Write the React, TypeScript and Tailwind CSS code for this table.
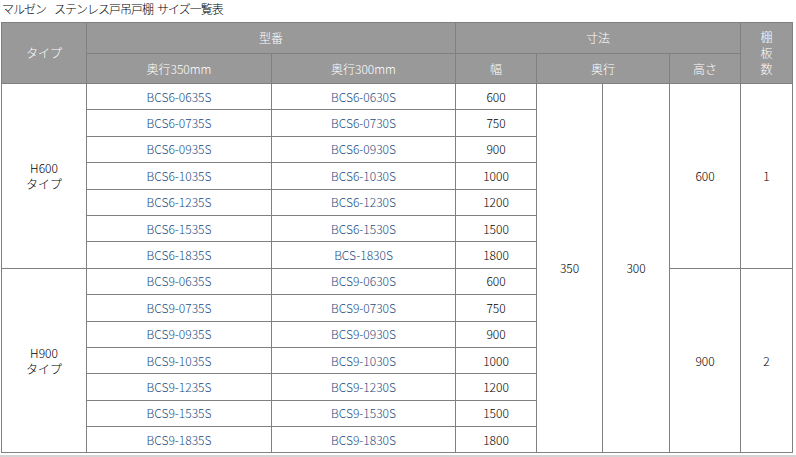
const rows6 = [
  ['BCS6-0635S', 'BCS6-0630S', '600'],
  ['BCS6-0735S', 'BCS6-0730S', '750'],
  ['BCS6-0935S', 'BCS6-0930S', '900'],
  ['BCS6-1035S', 'BCS6-1030S', '1000'],
  ['BCS6-1235S', 'BCS6-1230S', '1200'],
  ['BCS6-1535S', 'BCS6-1530S', '1500'],
  ['BCS6-1835S', 'BCS-1830S', '1800'],
]

const rows9 = [
  ['BCS9-0635S', 'BCS9-0630S', '600'],
  ['BCS9-0735S', 'BCS9-0730S', '750'],
  ['BCS9-0935S', 'BCS9-0930S', '900'],
  ['BCS9-1035S', 'BCS9-1030S', '1000'],
  ['BCS9-1235S', 'BCS9-1230S', '1200'],
  ['BCS9-1535S', 'BCS9-1530S', '1500'],
  ['BCS9-1835S', 'BCS9-1830S', '1800'],
]

const th = 'border border-[#808080] bg-[#999999] text-white font-light text-center p-0'
const td = 'border border-[#808080] text-center p-0'
const link = 'text-[#1a4c80]'

const App = () => {
  const groups = [
    { type: 'H600', height: '600', shelves: '1', rows: rows6 },
    { type: 'H900', height: '900', shelves: '2', rows: rows9 },
  ]

  return (
    <div
      className="relative h-[457px] w-[796px] overflow-hidden bg-white text-[12px] font-light leading-[16px] text-black"
      style={{ fontFamily: '"Noto Sans CJK JP", "Liberation Sans", sans-serif' }}
    >
      <div className="flex h-[22px] pl-[2px] pt-[1px] tracking-[-1px]">
        <span>マルゼン</span>
        <span className="ml-[8px]">ステンレス戸吊戸棚</span>
        <span className="ml-[4px]">サイズ一覧表</span>
      </div>
      <table className="ml-[1px] w-[791px] table-fixed border-collapse">
        <colgroup>
          <col className="w-[85px]" />
          <col className="w-[185px]" />
          <col className="w-[184px]" />
          <col className="w-[81px]" />
          <col className="w-[66px]" />
          <col className="w-[67px]" />
          <col className="w-[71px]" />
          <col className="w-[52px]" />
        </colgroup>
        <thead>
          <tr className="h-[31px]">
            <th rowSpan={2} className={th}>タイプ</th>
            <th colSpan={2} className={th}>型番</th>
            <th colSpan={4} className={th}>寸法</th>
            <th rowSpan={2} className={th}>
              <div className="flex flex-col items-center">
                <span>棚</span>
                <span>板</span>
                <span>数</span>
              </div>
            </th>
          </tr>
          <tr className="h-[30px]">
            <th className={th}>奥行350mm</th>
            <th className={th}>奥行300mm</th>
            <th className={th}>幅</th>
            <th colSpan={2} className={th}>奥行</th>
            <th className={th}>高さ</th>
          </tr>
        </thead>
        <tbody>
          {groups.map((g, gi) =>
            g.rows.map((r, i) => (
              <tr key={g.type + i} className="h-[26.4px]">
                {i === 0 && (
                  <td rowSpan={7} className={td}>
                    {g.type}
                    <br />
                    タイプ
                  </td>
                )}
                <td className={td}>
                  <span className={link}>{r[0]}</span>
                </td>
                <td className={td}>
                  <span className={link}>{r[1]}</span>
                </td>
                <td className={td}>{r[2]}</td>
                {gi === 0 && i === 0 && (
                  <>
                    <td rowSpan={14} className={td}>350</td>
                    <td rowSpan={14} className={td}>300</td>
                  </>
                )}
                {i === 0 && (
                  <>
                    <td rowSpan={7} className={td}>{g.height}</td>
                    <td rowSpan={7} className={td}>{g.shelves}</td>
                  </>
                )}
              </tr>
            ))
          )}
        </tbody>
      </table>
      <div className="absolute bottom-0 left-0 h-[2px] w-full bg-[#d4d4d4]" />
    </div>
  )
}

export default App
